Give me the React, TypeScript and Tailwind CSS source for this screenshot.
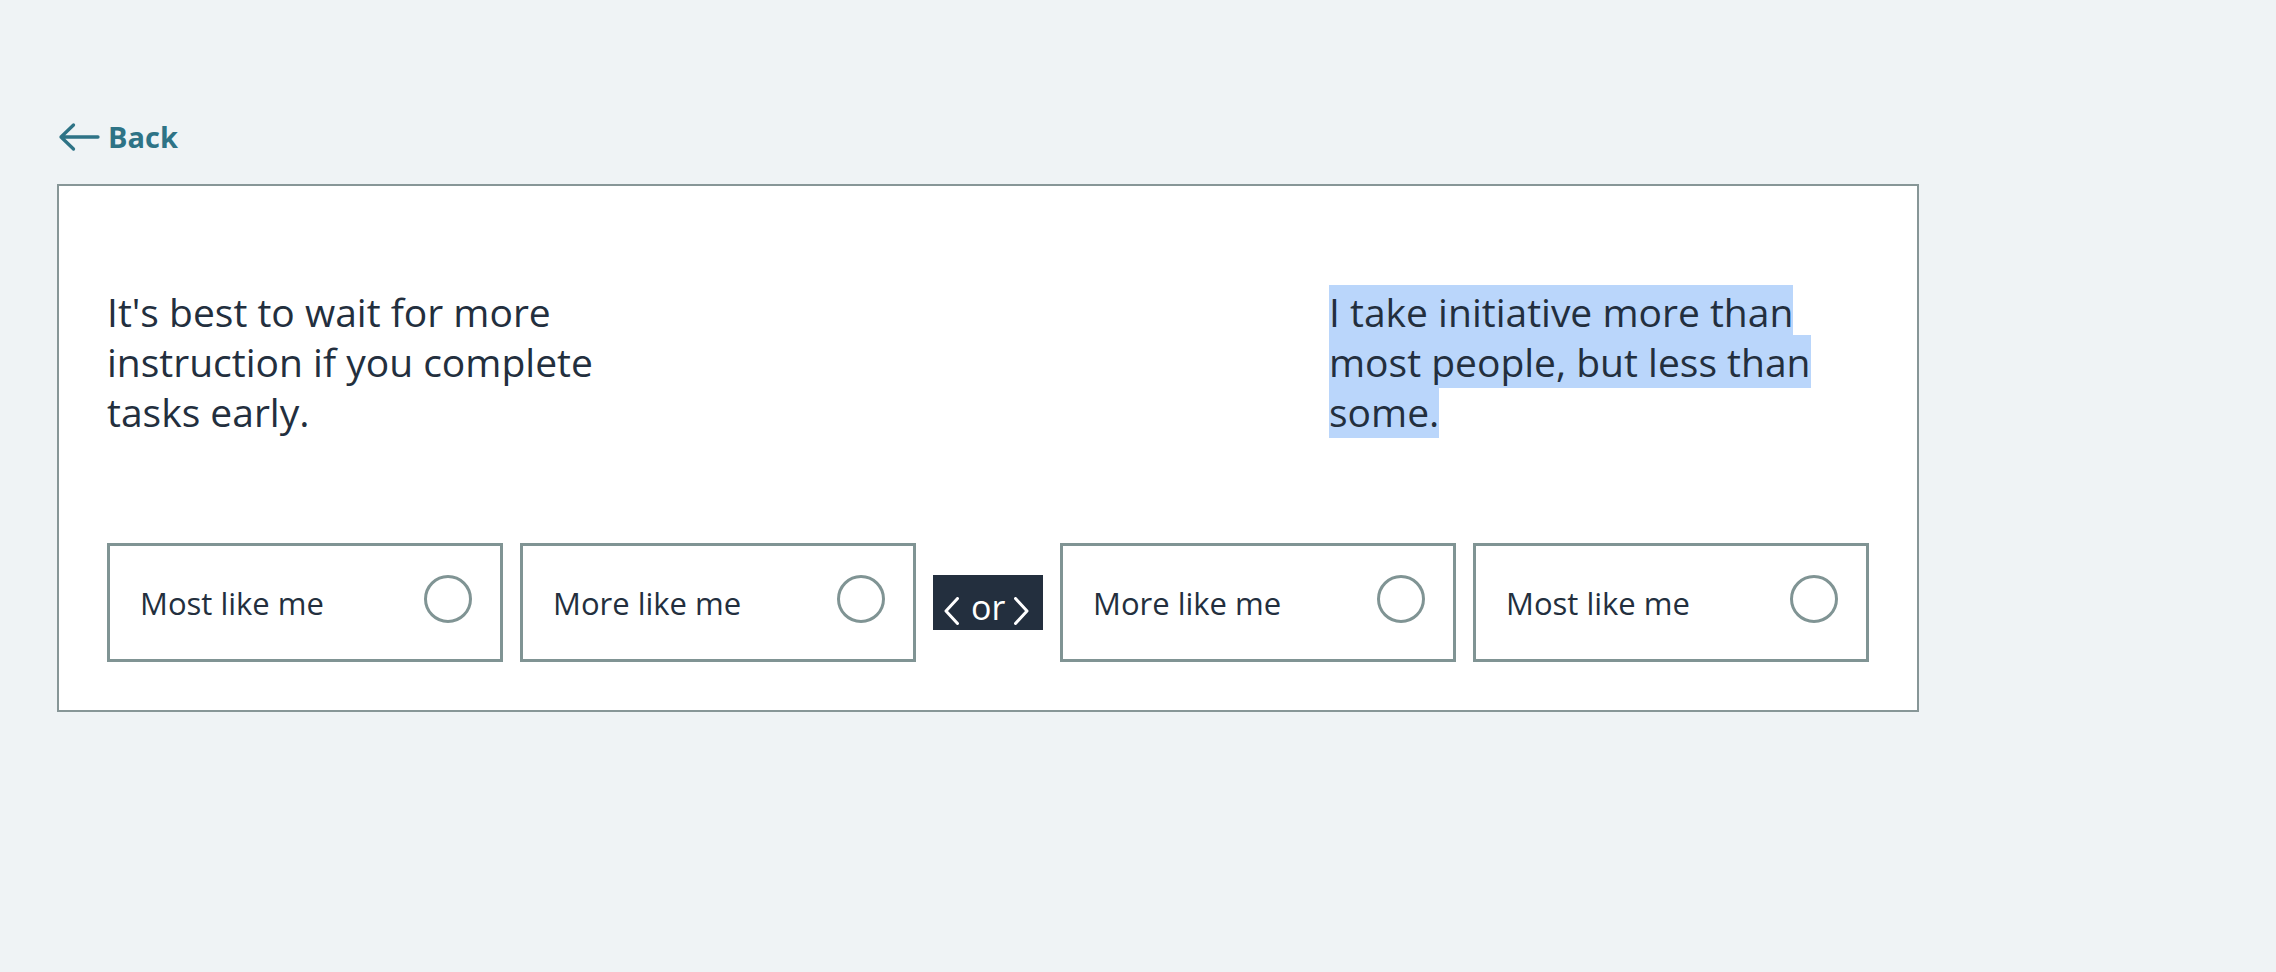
import React from "react";

// アンケート設問カード: 2つの文のうちどちらが自分に近いかを選ぶ

const FONT = { fontFamily: '"Open Sans", "Noto Sans", Arial, sans-serif' };

const OPTIONS_LEFT = ["Most like me", "More like me"];
const OPTIONS_RIGHT = ["More like me", "Most like me"];

function BackArrow() {
  return (
    <svg width="42" height="30" viewBox="0 0 42 30" fill="none" className="shrink-0">
      <path
        d="M40 15H3M15.5 3L3 15L15.5 27"
        stroke="currentColor"
        strokeWidth="3.3"
        strokeLinecap="round"
        strokeLinejoin="round"
      />
    </svg>
  );
}

function Chevron({ dir }: { dir: "left" | "right" }) {
  const d = dir === "left" ? "M13.5 1.5L2 14L13.5 26.5" : "M1.5 1.5L13 14L1.5 26.5";
  return (
    <svg width="15" height="28" viewBox="0 0 15 28" fill="none" className="mt-[7px] shrink-0">
      <path d={d} stroke="white" strokeWidth="3" strokeLinecap="round" strokeLinejoin="round" />
    </svg>
  );
}

function OptionBox({ label }: { label: string }) {
  return (
    <button
      type="button"
      className="flex h-[119px] flex-1 items-center justify-between border-[3px] border-[#809494] bg-white pl-[30px] pr-[28px] text-left"
    >
      <span className="mt-[2px] text-[31px] text-[#232f3e]">{label}</span>
      <span className="mb-[7px] h-[48px] w-[48px] shrink-0 rounded-full border-[3px] border-[#809494]" />
    </button>
  );
}

function OrBadge() {
  return (
    <div className="flex h-[55px] w-[110px] shrink-0 items-center bg-[#232f3e] pl-[11px] pt-[9px] text-white">
      <Chevron dir="left" />
      <span className="ml-[12px] text-[34px] leading-[46px]">or</span>
      <span className="ml-[9px] flex">
        <Chevron dir="right" />
      </span>
    </div>
  );
}

export default function App() {
  return (
    <div className="min-h-screen bg-[#eff3f5] pl-[57px] pt-[117px]" style={FONT}>
      {/* 戻るリンク */}
      <a href="#" className="ml-[1px] flex h-[40px] w-fit items-center gap-[8px] text-[#2e7386]">
        <BackArrow />
        <span className="text-[29px] font-bold leading-[40px]">Back</span>
      </a>

      {/* 設問カード */}
      <section className="mt-[27px] w-[1862px] border-2 border-[#879697] bg-white px-[48px] pb-[48px] pt-[101px]">
        <div className="flex justify-between text-[39px] leading-[50px] text-[#232f3e]">
          <p className="w-[540px]">It's best to wait for more instruction if you complete tasks early.</p>
          <p className="w-[540px]">
            <span className="bg-[#bad6fb]">I take initiative more than most people, but less than some.</span>
          </p>
        </div>

        <div className="mt-[106px] flex items-center gap-[17px]">
          {OPTIONS_LEFT.map((o, i) => (
            <OptionBox key={`l-${i}`} label={o} />
          ))}
          <OrBadge />
          {OPTIONS_RIGHT.map((o, i) => (
            <OptionBox key={`r-${i}`} label={o} />
          ))}
        </div>
      </section>
    </div>
  );
}
